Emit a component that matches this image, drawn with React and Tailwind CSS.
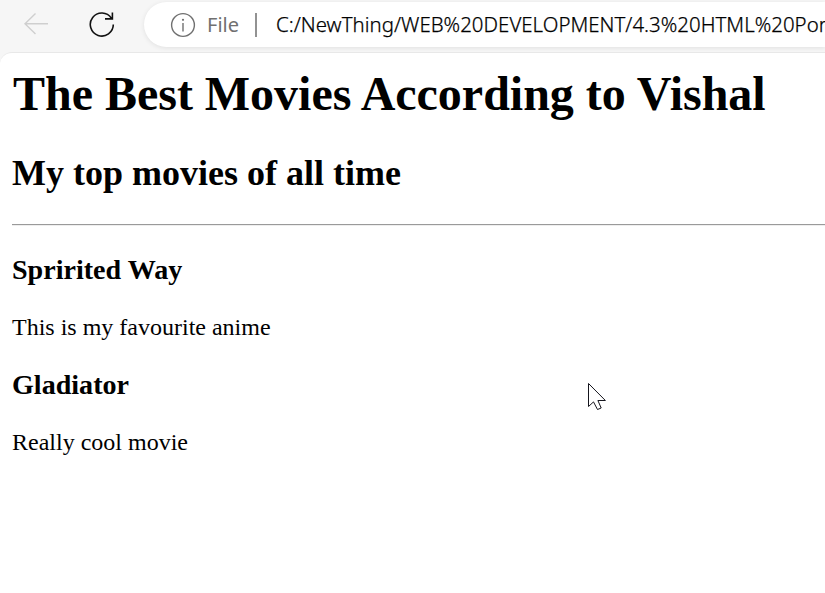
function BackIcon() {
  return (
    <svg className="ml-6 shrink-0" width="24" height="24" viewBox="0 0 24 24" fill="none" stroke="#cfcfcf" strokeWidth="1.4">
      <path d="M11.5 1.5 1 11.8l10.5 10.2M1 11.8h23" />
    </svg>
  );
}

function ReloadIcon() {
  return (
    <svg className="ml-10 shrink-0" width="28" height="28" viewBox="0 0 28 28" fill="none" stroke="#111" strokeWidth="1.6">
      <path d="M25.3 14.5A11.5 11.5 0 1 1 23.4 8.2M24.4 2.5v6.4H17" />
    </svg>
  );
}

function InfoIcon() {
  return (
    <svg className="ml-[26px] shrink-0" width="26" height="26" viewBox="0 0 26 26" fill="none" stroke="#707070" strokeWidth="1.4">
      <circle cx="13" cy="13" r="11.4" />
      <path d="M13 11v8.5" />
      <circle cx="13" cy="7.8" r="1.1" fill="#707070" stroke="none" />
    </svg>
  );
}

function Toolbar() {
  return (
    <header className="flex h-[52px] items-center bg-[#f6f6f6] pb-1 font-['Noto_Sans',sans-serif]">
      <BackIcon />
      <ReloadIcon />
      <div className="ml-7 flex h-[45px] w-[681px] shrink-0 items-center rounded-l-full bg-white pt-px whitespace-nowrap shadow-[0_1px_5px_rgba(0,0,0,0.09)]">
        <InfoIcon />
        <span className="ml-[11px] w-[48px] shrink-0 pt-px text-[20px] text-[#707070]">File</span>
        <span className="h-6 w-[2px] shrink-0 bg-[#929292]" />
        <span className="ml-[19px] shrink-0 text-[20.4px] font-light tracking-[0.03px] text-black [-webkit-text-stroke:0.25px_black]">C:/NewThing/WEB%20DEVELOPMENT/4.3%20HTML%20Por</span>
      </div>
    </header>
  );
}

function Cursor() {
  return (
    <svg className="absolute top-[382px] left-[587px]" width="21" height="30" viewBox="0 0 21 30">
      <path d="M1.5 1.5v23l5-4.6 4 7.6 3.7-1.5-3.3-7.5h7.5z" fill="white" stroke="#15151d" strokeWidth="1" />
    </svg>
  );
}

export default function App() {
  return (
    <div className="relative flex h-[593px] w-[825px] flex-col overflow-hidden bg-[#f6f6f6]">
      <Toolbar />
      <main className="flex-1 rounded-tl-[12px] border-t border-[#e8e8e8] bg-white pt-[13px] pl-3 font-['Liberation_Serif',serif] text-black">
        <h1 className="ml-px text-[48px] leading-[55px] font-bold tracking-[-0.02px]">The Best Movies According to Vishal</h1>
        <h2 className="mt-8 text-[36px] leading-[41px] font-bold">My top movies of all time</h2>
        <hr className="mt-[30px] h-[2px] border-t border-b border-t-[#9a9a9a] border-b-[#eeeeee]" />
        <h3 className="mt-7 text-[28.08px] leading-8 font-bold">Spririted Way</h3>
        <p className="mt-7 text-[24px] leading-[27px]">This is my favourite anime</p>
        <h3 className="mt-7 text-[28.08px] leading-8 font-bold">Gladiator</h3>
        <p className="mt-7 text-[24px] leading-[27px]">Really cool movie</p>
      </main>
      <Cursor />
    </div>
  );
}
